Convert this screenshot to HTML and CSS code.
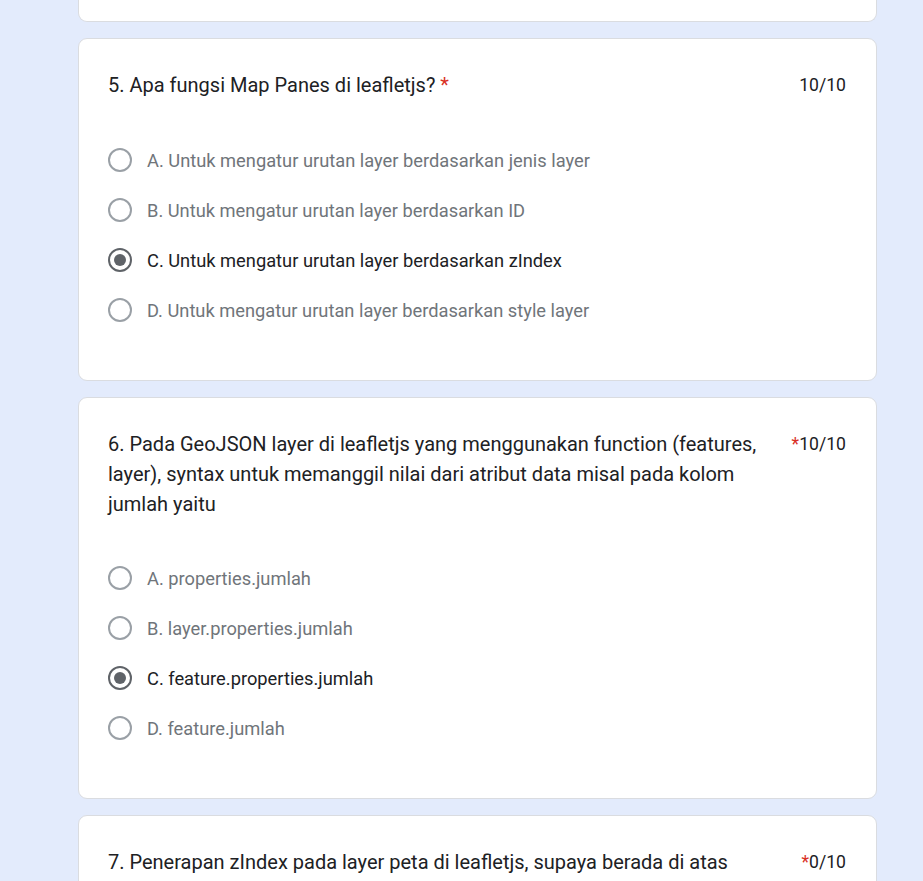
FILE: index.html
```html
<!DOCTYPE html>
<html lang="id">
<head>
<meta charset="utf-8">
<title>Quiz</title>
<link rel="stylesheet" href="styles.css">
</head>
<body>
<main class="page">
  <section class="card card-tail"></section>

  <section class="card">
    <div class="q-head">
      <div class="q-title">5. Apa fungsi Map Panes di leafletjs? <span class="req">*</span></div>
      <div class="q-score">10/10</div>
    </div>
    <div class="options">
      <div class="opt"><span class="radio"></span><span class="opt-text">A. Untuk mengatur urutan layer berdasarkan jenis layer</span></div>
      <div class="opt"><span class="radio"></span><span class="opt-text">B. Untuk mengatur urutan layer berdasarkan ID</span></div>
      <div class="opt checked"><span class="radio"></span><span class="opt-text">C. Untuk mengatur urutan layer berdasarkan zIndex</span></div>
      <div class="opt"><span class="radio"></span><span class="opt-text">D. Untuk mengatur urutan layer berdasarkan style layer</span></div>
    </div>
  </section>

  <section class="card card-long">
    <div class="q-head">
      <div class="q-title">6. Pada GeoJSON layer di leafletjs yang menggunakan function (features, layer), syntax untuk memanggil nilai dari atribut data misal pada kolom jumlah yaitu</div>
      <div class="q-score"><span class="req">*</span>10/10</div>
    </div>
    <div class="options">
      <div class="opt"><span class="radio"></span><span class="opt-text">A. properties.jumlah</span></div>
      <div class="opt"><span class="radio"></span><span class="opt-text">B. layer.properties.jumlah</span></div>
      <div class="opt checked"><span class="radio"></span><span class="opt-text">C. feature.properties.jumlah</span></div>
      <div class="opt"><span class="radio"></span><span class="opt-text">D. feature.jumlah</span></div>
    </div>
  </section>

  <section class="card">
    <div class="q-head">
      <div class="q-title">7. Penerapan zIndex pada layer peta di leafletjs, supaya berada di atas layer lainnya</div>
      <div class="q-score"><span class="req">*</span>0/10</div>
    </div>
  </section>
</main>
</body>
</html>
```

FILE: styles.css
```css
html, body {
  margin: 0;
  padding: 0;
}
body {
  background: #e3ebfc;
  font-family: Roboto, "Noto Sans", Arial, sans-serif;
  color: #202124;
  overflow: hidden;
  height: 881px;
}
.page {
  width: 799px;
  margin-left: 78px;
  display: flex;
  flex-direction: column;
  gap: 16px;
}
.card {
  box-sizing: border-box;
  background: #fff;
  border: 1px solid #dadce0;
  border-radius: 9px;
  padding: 31px 30px 45px 29px;
}
.card-tail {
  height: 22px;
  padding: 0;
  border-top: none;
  border-radius: 0 0 9px 9px;
}
.q-head {
  display: flex;
  justify-content: space-between;
  gap: 30px;
  font-size: 20px;
  line-height: 30px;
}
.q-title {
  flex: 1;
}
.q-score {
  white-space: nowrap;
  font-size: 17.6px;
}
.req {
  color: #d93025;
}
.options {
  margin-top: 35px;
  display: flex;
  flex-direction: column;
}
.card-long .options {
  margin-top: 34px;
}
.opt {
  display: flex;
  align-items: center;
  height: 50px;
  gap: 15px;
  font-size: 18.3px;
  color: #70757a;
}
.opt.checked {
  color: #202124;
}
.radio {
  box-sizing: border-box;
  width: 24px;
  height: 24px;
  border: 2px solid #9aa0a6;
  border-radius: 50%;
  display: flex;
  align-items: center;
  justify-content: center;
  flex: none;
}
.opt.checked .radio {
  border-color: #5f6368;
}
.opt.checked .radio::after {
  content: "";
  width: 12px;
  height: 12px;
  border-radius: 50%;
  background: #5f6368;
}
```
